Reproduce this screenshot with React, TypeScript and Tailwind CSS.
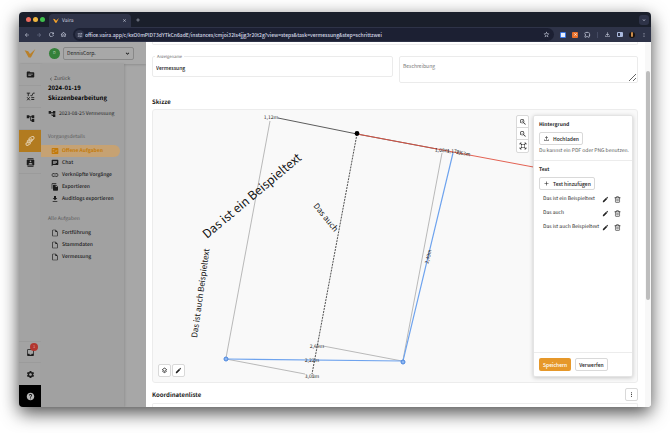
import type { ReactNode } from "react";
import { Trash2 } from "lucide-react";
import {
  MdAccountTree,
  MdArrowBack,
  MdArrowForward,
  MdAdd,
  MdChat,
  MdChevronLeft,
  MdClose,
  MdContacts,
  MdDownload,
  MdEdit,
  MdExpandMore,
  MdFactCheck,
  MdFileCopy,
  MdHelp,
  MdInbox,
  MdLink,
  MdMoreVert,
  MdOutlineExtension,
  MdOutlineFileDownload,
  MdOutlineFileUpload,
  MdOutlineHome,
  MdOutlineInsertDriveFile,
  MdOutlineLayers,
  MdRefresh,
  MdSettings,
  MdSource,
  MdStarBorder,
  MdTune,
  MdZoomIn,
  MdZoomOut,
} from "react-icons/md";

const Logo = ({ className }: { className: string }) => (
  <svg viewBox="0 0 24 20" className={className} aria-hidden="true">
    <path d="M0 3 L8 5 L12 11 L24 0 L14 19 L9 19 Z" fill="currentColor" />
  </svg>
);

const FormulaIcon = () => (
  <svg viewBox="0 0 24 24" className="size-[9px]" fill="none" stroke="currentColor" strokeWidth="2.4">
    <path d="M2 3h9M6 3v8M12 8l3 3 4-8h4M3 14l7 8M10 14l-7 8M14 15h8M14 20h8" />
  </svg>
);

const ChainIcon = () => (
  <svg viewBox="0 0 24 24" className="size-[10px]" fill="none" stroke="currentColor" strokeWidth="2.4">
    <rect x="9" y="3" width="13" height="7" rx="3.500" transform="rotate(-30 15 6)" />
    <rect x="5" y="9" width="13" height="6" rx="3" transform="rotate(-30 11 12)" />
    <rect x="2" y="15" width="11" height="6" rx="3" transform="rotate(-30 8 18)" />
  </svg>
);

const FitIcon = () => (
  <svg viewBox="0 0 24 24" className="size-2" fill="none" stroke="currentColor" strokeWidth="2">
    <path d="M3 8V3h5M16 3h5v5M21 16v5h-5M8 21H3v-5M3 3l6 6M21 3l-6 6M21 21l-6-6M3 21l6-6" />
    <rect x="8" y="8" width="8" height="8" strokeWidth="1.5" />
  </svg>
);

const RAIL = [
  { label: "Vorgänge", icon: <MdSource size={9} /> },
  { label: "Formeln", icon: <FormulaIcon /> },
  { label: "Prozesse", icon: <MdAccountTree size={9} /> },
  { label: "Instanzen", icon: <ChainIcon />, active: true },
  { label: "Kontakte", icon: <MdContacts size={9} /> },
];

const DETAILS = [
  { label: "Offene Aufgaben", icon: <MdFactCheck size={8} />, active: true },
  { label: "Chat", icon: <MdChat size={8} /> },
  { label: "Verknüpfte Vorgänge", icon: <MdLink size={8} /> },
  { label: "Exportieren", icon: <MdFileCopy size={8} /> },
  { label: "Auditlogs exportieren", icon: <MdDownload size={8} /> },
];

const TASKS = ["Fortführung", "Stammdaten", "Vermessung"];

const TEXTS = ["Das ist ein Beispieltext", "Das auch", "Das ist auch Beispieltext"];

const BrowserBar = () => (
  <header className="text-[#c9cede]">
    <div className="flex h-[15px] items-end bg-[#1a1f2b] pl-[7px] pr-[2px]">
      <div className="flex gap-[2px] pb-[5px]">
        <span className="size-[5px] rounded-full bg-[#ec6a5e]" />
        <span className="size-[5px] rounded-full bg-[#f0b73f]" />
        <span className="size-[5px] rounded-full bg-[#3fc04c]" />
      </div>
      <div className="ml-1 flex h-[13px] w-[82px] items-center rounded-t-[4px] bg-[#2e3348] px-1 text-[5px]">
        <Logo className="h-[5px] w-[6px] text-[#f5a32a]" />
        <span className="ml-[3px] flex-1">Vaira</span>
        <button aria-label="Tab schließen"><MdClose size={5} /></button>
      </div>
      <button aria-label="Neuer Tab" className="mb-1 ml-1"><MdAdd size={6} /></button>
      <button aria-label="Tabs suchen" className="mb-[2px] ml-auto flex size-[10px] items-center justify-center rounded-[3px] bg-[#2e3348]">
        <MdExpandMore size={6} />
      </button>
    </div>
    <div className="flex h-[15px] items-center bg-[#2e3348] pl-[5px] pr-1">
      <button aria-label="Zurück"><MdArrowBack size={6} /></button>
      <button aria-label="Vor" className="ml-[6px] text-[#757b92]"><MdArrowForward size={6} /></button>
      <button aria-label="Neu laden" className="ml-[6px]"><MdRefresh size={7} /></button>
      <button aria-label="Startseite" className="ml-[5px]"><MdOutlineHome size={7} /></button>
      <div className="ml-[6px] flex h-[13px] flex-1 items-center rounded-full bg-[#1c2033] pl-[2px] pr-1">
        <span className="flex size-[9px] items-center justify-center rounded-full bg-[#2e3348]">
          <MdTune size={6} />
        </span>
        <input
          aria-label="Adresse"
          readOnly
          className="ml-[1px] min-w-0 flex-1 text-[5px] font-medium leading-[8px] text-[#d4d8e6] outline-none"
          value="office.vaira.app/c/kxO0mPlD73dYTkCn6adE/instances/cmjoi32ls4jjg3r20t2g?view=steps&task=vermessung&step=schrittzwei"
        />
        <MdStarBorder size={7} />
      </div>
      <div className="ml-[6px] flex items-center gap-[6px]">
        <span className="size-[6px] rounded-[1px] border border-[#3c78e6] bg-[#e8eefc]" />
        <span className="flex size-[6px] items-center justify-center rounded-[1px] bg-[#e8702a] text-white">
          <MdClose size={5} />
        </span>
        <MdOutlineExtension size={7} />
        <span className="h-[6px] w-px bg-[#454b63]" />
        <MdOutlineFileDownload size={7} />
        <span className="h-[5px] w-[6px] rounded-[1px] border border-r-[3px] border-[#aab9dd]" />
        <span className="flex size-[6px] justify-center rounded-full bg-[#18120f]">
          <span className="h-[5px] w-[2px] rounded-full bg-[#c98a4a]" />
        </span>
        <MdMoreVert size={6} />
      </div>
    </div>
  </header>
);

const Rail = () => (
  <nav aria-label="Hauptnavigation" className="flex w-[22px] shrink-0 flex-col bg-[#a3a3a3] text-[#1c1c1c] shadow-[1px_0_2px_rgba(0,0,0,0.2)]">
    {RAIL.map((item) => (
      <a
        key={item.label}
        href="#"
        aria-label={item.label}
        className={
          item.active
            ? "flex h-[22px] items-center justify-center bg-[#b27b20] text-[#e0c9a4]"
            : "flex h-[22px] items-center justify-center border-b border-[#9b9b9b]"
        }
      >
        {item.icon}
      </a>
    ))}
    <a href="#" aria-label="Posteingang" className="relative mt-auto flex h-[22px] items-center justify-center border-y border-[#9b9b9b]">
      <MdInbox size={9} />
      <span className="absolute right-[3px] top-px flex size-2 items-center justify-center rounded-full bg-[#b23730] text-[4px] text-[#e3b5b2]">
        1
      </span>
    </a>
    <a href="#" aria-label="Einstellungen" className="flex h-[22px] items-center justify-center">
      <MdSettings size={9} />
    </a>
    <a href="#" aria-label="Hilfe" className="flex h-[22px] items-center justify-center bg-black text-[#b5b5b5]">
      <MdHelp size={9} />
    </a>
  </nav>
);

const SideLink = ({ icon, active, children }: { icon: ReactNode; active?: boolean; children: ReactNode }) => (
  <a
    href="#"
    className={
      active
        ? "mr-1 flex h-3 items-center gap-[3px] rounded-r-full bg-[#c6a273] pl-[10px] font-bold text-[#c47a08]"
        : "mr-1 flex h-3 items-center gap-[3px] pl-[10px] font-medium text-[#1c1c1c]"
    }
  >
    {icon}
    <span>{children}</span>
  </a>
);

const Sidebar = () => (
  <aside className="w-[83px] shrink-0 whitespace-nowrap bg-[#a1a1a1] pt-[11px] text-[5px] leading-[8px] shadow-[1px_0_2px_rgba(0,0,0,0.12)]">
    <div className="pl-[7px] text-[#1c1c1c]">
      <a href="#" className="flex items-center text-[#444]">
        <MdChevronLeft size={6} />
        Zurück
      </a>
      <h1 className="text-[6px] font-bold leading-[10px] text-black">
        2024-01-19
        <br />
        Skizzenbearbeitung
      </h1>
      <p className="mt-[7px] flex items-center gap-[3px]">
        <MdAccountTree size={8} />
        2023-08-25 Vermessung
      </p>
    </div>
    <h2 className="mt-[15px] pl-[7px] text-[#5c5c5c]">Vorgangsdetails</h2>
    <nav aria-label="Vorgangsdetails" className="mt-1">
      {DETAILS.map((item) => (
        <SideLink key={item.label} icon={item.icon} active={item.active}>
          {item.label}
        </SideLink>
      ))}
    </nav>
    <h2 className="mt-[10px] pl-[7px] text-[#5c5c5c]">Alle Aufgaben</h2>
    <nav aria-label="Alle Aufgaben" className="mt-1">
      {TASKS.map((task) => (
        <SideLink key={task} icon={<MdOutlineInsertDriveFile size={8} />}>
          {task}
        </SideLink>
      ))}
    </nav>
  </aside>
);

const Sketch = () => (
  <svg className="absolute inset-0 size-full" fill="none" role="img" aria-label="Skizze">
    <g stroke="#8d8d8d" strokeWidth="0.6">
      <path d="M117 11L73 248" />
      <path d="M73 249L152 264" />
      <path d="M249 251L170 236" />
      <path d="M289 43L250 250" />
    </g>
    <path d="M125 8L204 24L284 39" stroke="#333" strokeWidth="0.8" />
    <path d="M204 24L391 59" stroke="#e0503f" strokeWidth="0.9" />
    <path d="M204 24L159 264" stroke="#222" strokeWidth="0.8" strokeDasharray="2 1" />
    <path d="M300 43L250 251L73 249" stroke="#6ea3ee" strokeWidth="1.2" />
    <circle cx="204" cy="23.500" r="2.400" fill="#000" />
    <g fill="#8db6f2" stroke="#4a86de">
      <circle cx="73" cy="249" r="2" />
      <circle cx="250" cy="252" r="2" />
    </g>
    <g fill="#222" fontSize="5" textAnchor="middle">
      <text x="118" y="9">1,12m</text>
      <text x="164" y="238">2,69m</text>
      <text x="159" y="252">2,22m</text>
      <text x="159" y="268">3,08m</text>
      <text x="289" y="42" transform="rotate(4 289 42)">1,08m</text>
      <text x="301" y="43" transform="rotate(4 301 43)">1,17m</text>
      <text x="310" y="45" transform="rotate(10 310 45)">2,63m</text>
      <text x="277" y="147" transform="rotate(-76 277 147)">2,49m</text>
    </g>
    <g fill="#111">
      <text x="54" y="129" fontSize="12" transform="rotate(-40 54 129)">Das ist ein Beispieltext</text>
      <text x="160" y="96" fontSize="8" transform="rotate(51 160 96)">Das auch</text>
      <text x="44" y="228" fontSize="8" transform="rotate(-82 44 228)">Das ist auch Beispieltext</text>
    </g>
  </svg>
);

const OutlineButton = ({ children }: { children: ReactNode }) => (
  <button className="flex h-[13px] items-center gap-[3px] rounded-[2px] border border-[#d9d9d9] bg-white px-[3px] font-medium">
    {children}
  </button>
);

const TextPanel = () => (
  <section className="absolute bottom-[5px] right-1 top-[5px] flex w-[100px] flex-col rounded-[2px] border border-[#e4e4e4] bg-white text-[5px] leading-[8px] shadow-[0_1px_4px_rgba(0,0,0,0.2)]">
    <div className="border-b border-[#ececec] p-[5px]">
      <h3 className="mb-[3px] font-bold">Hintergrund</h3>
      <OutlineButton>
        <MdOutlineFileUpload size={7} />
        Hochladen
      </OutlineButton>
      <p className="mt-[2px] whitespace-nowrap text-[#555]">Du kannst ein PDF oder PNG benutzen.</p>
    </div>
    <div className="flex-1 px-[5px] pt-[5px]">
      <h3 className="mb-[3px] font-bold">Text</h3>
      <OutlineButton>
        <MdAdd size={7} />
        Text hinzufügen
      </OutlineButton>
      <ul className="mt-[2px]">
        {TEXTS.map((text) => (
          <li key={text} className="flex h-[14px] items-center gap-[5px] pl-1 pr-[6px]">
            <span className="min-w-0 flex-1 whitespace-nowrap">{text}</span>
            <button aria-label={`${text} bearbeiten`}><MdEdit size={7} /></button>
            <button aria-label={`${text} löschen`}><Trash2 size={7} strokeWidth={2} /></button>
          </li>
        ))}
      </ul>
    </div>
    <div className="flex gap-1 border-t border-[#ececec] p-[5px]">
      <button className="h-[13px] rounded-[2px] bg-[#e6982a] px-1 font-medium text-white">Speichern</button>
      <OutlineButton>Verwerfen</OutlineButton>
    </div>
  </section>
);

const IconButton = ({ label, children }: { label: string; children: ReactNode }) => (
  <button
    aria-label={label}
    className="flex size-[13px] items-center justify-center rounded-[2px] border border-[#d9d9d9] bg-white"
  >
    {children}
  </button>
);

const Modal = () => (
  <main className="flex min-w-0 flex-1 bg-white text-[#222]">
    <div className="flex min-w-0 flex-1 flex-col pl-[6px] pr-[7px]">
      <div className="h-[3px] rounded-b-[2px] border border-t-0 border-[#ededed]" />
      <div className="mt-[11px] flex items-start gap-[6px]">
        <div className="h-[21px] w-[241px] rounded-[2px] border border-[#ebebeb]">
          <label htmlFor="name" className="-mt-[3px] ml-[2px] block w-max bg-white px-[2px] text-[4px] leading-[6px] text-[#666]">
            Anzeigename
          </label>
          <input id="name" defaultValue="Vermessung" className="mt-1 block w-full px-[3px] text-[5px] font-medium leading-[8px] outline-none" />
        </div>
        <textarea
          aria-label="Beschreibung"
          placeholder="Beschreibung"
          className="h-[27px] min-w-0 flex-1 rounded-[2px] border border-[#ebebeb] px-[3px] py-[5px] text-[5px] leading-[8px] placeholder:text-[#777]"
        />
      </div>
      <h2 className="mt-[14px] text-[6px] font-bold leading-[10px]">Skizze</h2>
      <div className="relative mt-[2px] flex-1 overflow-hidden rounded-[3px] border border-[#ececec] bg-[#f9f9f9]">
        <Sketch />
        <div className="absolute right-[108px] top-[5px] flex w-[13px] flex-col divide-y divide-[#d9d9d9] rounded-[2px] border border-[#d9d9d9] bg-white">
          <button aria-label="Vergrößern" className="flex h-3 items-center justify-center"><MdZoomIn size={8} /></button>
          <button aria-label="Verkleinern" className="flex h-3 items-center justify-center"><MdZoomOut size={8} /></button>
          <button aria-label="Einpassen" className="flex h-3 items-center justify-center"><FitIcon /></button>
        </div>
        <div className="absolute bottom-[5px] left-[5px] flex gap-px">
          <IconButton label="Ebenen"><MdOutlineLayers size={7} /></IconButton>
          <IconButton label="Zeichnen"><MdEdit size={7} /></IconButton>
        </div>
        <TextPanel />
      </div>
      <div className="mt-[5px] flex items-center justify-between">
        <h2 className="text-[6px] font-bold leading-[10px]">Koordinatenliste</h2>
        <IconButton label="Mehr"><MdMoreVert size={7} /></IconButton>
      </div>
      <div className="mt-[2px] h-1 rounded-t-[2px] border border-b-0 border-[#ededed]" />
    </div>
    <div className="w-[6px] bg-[#f8f8f8] px-px pt-[29px]">
      <div className="h-[229px] rounded-full bg-[#bdbdbd]" />
    </div>
  </main>
);

const App = () => {
  return (
    <div className="flex h-screen flex-col bg-white px-[19px] pb-[26px] pt-3 font-['Noto_Sans_CJK_SC',sans-serif] [text-rendering:geometricPrecision]">
      <div className="flex min-h-0 flex-1 flex-col overflow-hidden rounded-[4px] shadow-[0_6px_18px_rgba(0,0,0,0.7)]">
        <BrowserBar />
        <div className="flex min-h-0 flex-1">
          <div className="flex w-[127px] shrink-0 flex-col bg-[#a7a7a7]">
            <div className="flex h-[22px] shrink-0 items-center bg-[#a8a8a8] pl-[5px] shadow-[0_1px_2px_rgba(0,0,0,0.15)]">
              <Logo className="h-[9px] w-3 text-[#b9802a]" />
              <span className="ml-[13px] flex size-[11px] items-center justify-center rounded-full bg-[#35803a] text-[4px] text-[#b5d0b5]">
                D
              </span>
              <div className="relative ml-[3px] flex items-center">
                <select aria-label="Organisation" className="h-[13px] w-[71px] appearance-none rounded-[2px] border border-[#888] pl-[3px] text-[5px] text-[#222]">
                  <option>DennisCorp.</option>
                </select>
                <MdExpandMore size={7} className="pointer-events-none absolute right-[3px]" />
              </div>
            </div>
            <div className="flex min-h-0 flex-1">
              <Rail />
              <Sidebar />
            </div>
          </div>
          <Modal />
        </div>
      </div>
    </div>
  );
};

export default App;
